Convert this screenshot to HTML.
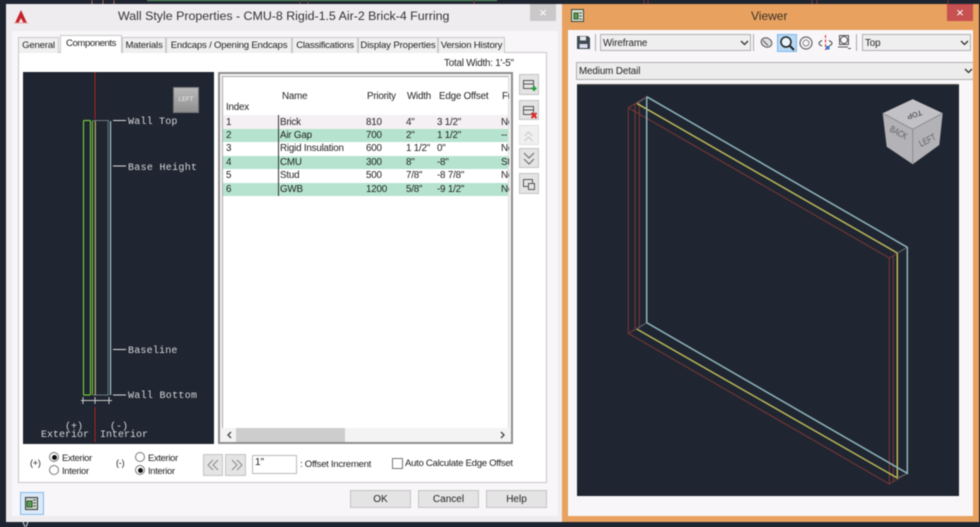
<!DOCTYPE html>
<html><head><meta charset="utf-8"><style>
html,body{margin:0;padding:0;background:#1e2430}
#p{position:relative;width:980px;height:527px;overflow:hidden;background:#1e2430;font:10px "Liberation Sans",sans-serif;color:#222;filter:blur(.45px)}
#p div,#p span.t{position:absolute;white-space:nowrap}
.t{line-height:12px}
.tab{background:#f0f0f0;border:1px solid #c9c9c9;border-bottom:0;box-sizing:border-box;height:16px;top:37px;text-align:center;line-height:15px;font-size:9.6px;letter-spacing:-.2px}
.btn{background:#e4e4e4;border:1px solid #c4c4c4;box-sizing:border-box;text-align:center}
.row{left:223px;width:285px;height:13.5px}
.c{font-size:9.8px;line-height:13px;color:#222;letter-spacing:-.2px}
.combo{background:#efefef;border:1px solid #b0b0b0;box-sizing:border-box;line-height:17px;padding-left:2px;font-size:9.8px;letter-spacing:-.1px}
.lbl{font-family:"Liberation Mono",monospace;color:#d6d8da;font-size:10px;letter-spacing:.2px;line-height:10px}
.rad{width:10px;height:10px;border:1px solid #777;border-radius:50%;background:#fff;box-sizing:border-box}
.rad.on:after{content:"";position:absolute;left:1.5px;top:1.5px;width:5px;height:5px;border-radius:50%;background:#111}
</style></head><body><div id="p">

<svg style="position:absolute;left:0;top:0" width="980" height="5"><g stroke-width="1"><path d="M92 0v4M103 0v4M114 0v4" stroke="#a86a60"/><path d="M147 0h350" stroke="#5da86a" stroke-width="2"/><path d="M300 0v4M308 0v4M474 0v4" stroke="#8a3a3a"/><path d="M644 0v4M648 0v4M812 0v4M817 0v4M948 0v4" stroke="#7a3a40"/></g></svg>

<!-- Dialog -->
<div style="left:6px;top:4px;width:556px;height:518px;background:#efecef"></div>
<div style="left:12px;top:31px;width:546px;height:485px;background:#f8f6f8"></div>
<svg style="position:absolute;left:13px;top:9px" width="16" height="16"><path d="M8 1L14 14H10.500L8 9 5.500 14H2z" fill="#c3242c"/><path d="M1 14h14" stroke="#e8a0a0"/></svg>
<div class="t" style="left:118px;top:9px;font-size:12.4px;line-height:15px;color:#333">Wall Style Properties - CMU-8 Rigid-1.5 Air-2 Brick-4 Furring</div>
<div style="left:530px;top:4px;width:26px;height:17px;background:#cbc8ca;color:#fff;text-align:center;font-size:13px;line-height:17px">×</div>

<div style="left:18px;top:52px;width:529px;height:431px;background:#fff;border:1px solid #c6c6c6;box-sizing:border-box"></div>
<div class="tab" style="left:18px;width:41px">General</div>
<div class="tab" style="left:60px;width:62px;top:35px;height:18px;background:#fff;line-height:16px;letter-spacing:-.45px">Components</div>
<div class="tab" style="left:122px;width:44px">Materials</div>
<div class="tab" style="left:166px;width:126px">Endcaps / Opening Endcaps</div>
<div class="tab" style="left:292px;width:66px;letter-spacing:-.25px">Classifications</div>
<div class="tab" style="left:358px;width:80px;letter-spacing:-.15px">Display Properties</div>
<div class="tab" style="left:438px;width:67px">Version History</div>
<div class="t" style="left:444px;top:58px;font-size:9.8px;letter-spacing:-.2px">Total Width: 1'-5"</div>

<!-- Preview -->
<div style="left:23px;top:72px;width:191px;height:372px;background:#1f2531"></div>
<svg style="position:absolute;left:23px;top:72px" width="191" height="372" fill="none">
<path d="M72 0V47M72 335V370" stroke="#b01e22" stroke-width="1"/>
<rect x="60.500" y="48.500" width="7" height="274.500" rx="1" stroke="#74c43a" stroke-width="1.200"/>
<path d="M69.500 323V50q0-1.500 1.500-1.500H86M86 323H70" stroke="#6f7678"/>
<path d="M69.500 49V323" stroke="#74c43a" stroke-width="1"/>
<path d="M72.300 49V323" stroke="#d8cb78" stroke-width="1"/>
<path d="M85 49V323" stroke="#6d7578" stroke-width="1"/>
<path d="M87.500 49V323" stroke="#9dc4cb" stroke-width="1.300"/>
<path d="M90 48.500h13M90 94h13M90 277.500h13M90 323h13" stroke="#dcdcdc" stroke-width="1"/>
<path d="M58 328.500H89M60 325v7M72 325v7M86 325v7" stroke="#c9cccc" stroke-width="1"/>
</svg>
<div class="lbl" style="left:128px;top:118px">Wall Top</div>
<div class="lbl" style="left:128px;top:164px;letter-spacing:.3px">Base Height</div>
<div class="lbl" style="left:128px;top:347px">Baseline</div>
<div class="lbl" style="left:128px;top:392px;letter-spacing:.3px">Wall Bottom</div>
<div class="lbl" style="left:65px;top:423px;letter-spacing:0">(+)</div>
<div class="lbl" style="left:41px;top:431px;letter-spacing:0">Exterior</div>
<div class="lbl" style="left:110px;top:423px;letter-spacing:0">(-)</div>
<div class="lbl" style="left:100px;top:431px;letter-spacing:0">Interior</div>
<div style="left:173px;top:87px;width:26px;height:26px;background:linear-gradient(#b9b9b9,#8f8f8f);border:1px solid #777;box-sizing:border-box;color:#eee;font-size:6px;text-align:center;line-height:24px">LEFT</div>

<!-- List -->
<div style="left:218px;top:72px;width:295px;height:372px;background:#f3f3f3;border:2px solid #8e8e8e;box-sizing:border-box"></div>
<div style="left:222px;top:76px;width:287px;height:352px;background:#fff;border:1px solid #a8a8a8;border-bottom:0;border-right:1px solid #ddd;box-sizing:border-box"></div>
<div class="c" style="left:226px;top:101px">Index</div>
<div class="c" style="left:282px;top:90px">Name</div>
<div class="c" style="left:367px;top:90px">Priority</div>
<div class="c" style="left:407px;top:90px">Width</div>
<div class="c" style="left:439px;top:90px">Edge Offset</div>
<div class="c" style="left:502px;top:90px;width:7px;overflow:hidden">Fu</div>
<div class="row" style="top:115px;background:#f5f0f3"></div>
<div class="row" style="top:128.500px;background:#b5e3cf"></div>
<div class="row" style="top:155.500px;background:#b5e3cf"></div>
<div class="row" style="top:182.500px;background:#b5e3cf"></div>
<div style="left:278px;top:115px;width:1px;height:81px;background:#333"></div>
<div class="c" style="left:226px;top:116px">1</div><div class="c" style="left:280px;top:116px">Brick</div><div class="c" style="left:366px;top:116px">810</div><div class="c" style="left:406px;top:116px">4"</div><div class="c" style="left:437px;top:116px">3 1/2"</div><div class="c" style="left:501px;top:116px;width:8px;overflow:hidden">No</div>
<div class="c" style="left:226px;top:129px">2</div><div class="c" style="left:280px;top:129px">Air Gap</div><div class="c" style="left:366px;top:129px">700</div><div class="c" style="left:406px;top:129px">2"</div><div class="c" style="left:437px;top:129px">1 1/2"</div><div class="c" style="left:501px;top:129px;width:8px;overflow:hidden">--</div>
<div class="c" style="left:226px;top:142px">3</div><div class="c" style="left:280px;top:142px">Rigid Insulation</div><div class="c" style="left:366px;top:142px">600</div><div class="c" style="left:406px;top:142px">1 1/2"</div><div class="c" style="left:437px;top:142px">0"</div><div class="c" style="left:501px;top:142px;width:8px;overflow:hidden">No</div>
<div class="c" style="left:226px;top:156px">4</div><div class="c" style="left:280px;top:156px">CMU</div><div class="c" style="left:366px;top:156px">300</div><div class="c" style="left:406px;top:156px">8"</div><div class="c" style="left:437px;top:156px">-8"</div><div class="c" style="left:501px;top:156px;width:8px;overflow:hidden">St</div>
<div class="c" style="left:226px;top:169px">5</div><div class="c" style="left:280px;top:169px">Stud</div><div class="c" style="left:366px;top:169px">500</div><div class="c" style="left:406px;top:169px">7/8"</div><div class="c" style="left:437px;top:169px">-8 7/8"</div><div class="c" style="left:501px;top:169px;width:8px;overflow:hidden">No</div>
<div class="c" style="left:226px;top:183px">6</div><div class="c" style="left:280px;top:183px">GWB</div><div class="c" style="left:366px;top:183px">1200</div><div class="c" style="left:406px;top:183px">5/8"</div><div class="c" style="left:437px;top:183px">-9 1/2"</div><div class="c" style="left:501px;top:183px;width:8px;overflow:hidden">No</div>
<!-- scrollbar -->
<div style="left:236px;top:428px;width:109px;height:14px;background:#cdcdcd"></div>
<svg style="position:absolute;left:222px;top:428px" width="287" height="14" fill="none" stroke="#444" stroke-width="1.300"><path d="M9 4L6 7l3 3M279 4l3 3-3 3"/></svg>

<!-- side buttons -->
<div class="btn" style="left:519px;top:74px;width:20px;height:21px"></div>
<div class="btn" style="left:519px;top:100px;width:20px;height:20px"></div>
<div class="btn" style="left:519px;top:125px;width:20px;height:20px;background:#f0f0f0;border-color:#e0e0e0"></div>
<div class="btn" style="left:519px;top:148px;width:20px;height:20px"></div>
<div class="btn" style="left:519px;top:173px;width:20px;height:21px"></div>
<svg style="position:absolute;left:519px;top:74px" width="20" height="120" fill="none">
<rect x="4.500" y="6.500" width="10" height="8" stroke="#555"/><path d="M5 10h9" stroke="#555"/><path d="M15 12v5M12.500 14.500h5" stroke="#1e9e3c" stroke-width="2"/>
<rect x="4.500" y="32.500" width="10" height="8" stroke="#555"/><path d="M5 36h9" stroke="#555"/><path d="M12.500 39l5 5M17.500 39l-5 5" stroke="#d22" stroke-width="2"/>
<path d="M5.500 62l4-4 4 4M5.500 67l4-4 4 4" stroke="#ccc" stroke-width="1.200"/>
<path d="M5 79l5 5 5-5M5 85l5 5 5-5" stroke="#666" stroke-width="1"/>
<rect x="4.500" y="105.500" width="9" height="7" stroke="#555"/><rect x="9.500" y="109.500" width="6" height="6" fill="#e4e4e4" stroke="#555"/>
</svg>

<!-- bottom controls -->
<div class="c" style="left:30px;top:457px;font-size:9px">(+)</div>
<div class="rad on" style="left:49px;top:452px"></div><div class="c" style="left:62px;top:451px;font-size:9.4px;letter-spacing:-.3px">Exterior</div>
<div class="rad" style="left:49px;top:465px"></div><div class="c" style="left:62px;top:464px;font-size:9.4px;letter-spacing:-.3px">Interior</div>
<div class="c" style="left:116px;top:457px;font-size:9px">(-)</div>
<div class="rad" style="left:135px;top:452px"></div><div class="c" style="left:148px;top:451px;font-size:9.4px;letter-spacing:-.3px">Exterior</div>
<div class="rad on" style="left:135px;top:465px"></div><div class="c" style="left:148px;top:464px;font-size:9.4px;letter-spacing:-.3px">Interior</div>
<div class="btn" style="left:203px;top:454px;width:20px;height:22px"></div>
<div class="btn" style="left:225px;top:454px;width:21px;height:22px"></div>
<svg style="position:absolute;left:203px;top:454px" width="44" height="22" fill="none" stroke="#8a8a8a" stroke-width="1"><path d="M10 6l-5 5 5 5M15 6l-5 5 5 5M29 6l5 5-5 5M34 6l5 5-5 5"/></svg>
<div style="left:252px;top:455px;width:45px;height:19px;background:#fff;border:1px solid #bbb;box-sizing:border-box;padding-left:2px;line-height:14px;font-size:10px">1"</div>
<div class="c" style="left:300px;top:458px;font-size:9.6px;letter-spacing:-.28px">: Offset Increment</div>
<div style="left:392px;top:458px;width:11px;height:11px;background:#fff;border:1px solid #777;box-sizing:border-box"></div>
<div class="c" style="left:405px;top:457px;font-size:9.6px;letter-spacing:-.3px">Auto Calculate Edge Offset</div>

<div class="btn" style="left:20px;top:492px;width:24px;height:23px;background:#dbe9f6;border:1px solid #7fbdf0"></div>
<svg style="position:absolute;left:24px;top:496px" width="16" height="15" fill="none"><rect x="1.500" y="1.500" width="12" height="12" fill="#cfd8cf" stroke="#333"/><path d="M3 5h5v6H3z" fill="#5a9a55" stroke="#2c5a2a"/><path d="M9 4h3M9 7h3M9 10h3" stroke="#555"/></svg>
<div class="btn" style="left:350px;top:490px;width:61px;height:18px;font-size:10px;line-height:17px">OK</div>
<div class="btn" style="left:418px;top:490px;width:61px;height:18px;font-size:10px;line-height:17px">Cancel</div>
<div class="btn" style="left:486px;top:490px;width:61px;height:18px;font-size:10px;line-height:17px">Help</div>

<!-- Viewer -->
<div style="left:562px;top:4px;width:417px;height:518px;background:#e8a15f"></div>
<div style="left:568px;top:30px;width:405px;height:486px;background:#f8f6f8;overflow:hidden">
<div class="combo" style="left:8px;top:32px;width:398px;height:18px;background:#ececec">Medium Detail</div>
</div>
<svg style="position:absolute;left:571px;top:9px" width="14" height="14" fill="none"><rect x=".5" y=".5" width="12" height="12" fill="#d9e2d4" stroke="#3a4a3a"/><path d="M3 4h4v6H3z" fill="#5a9a55" stroke="#2c5a2a"/><path d="M8 4h3M8 7h3M8 10h3" stroke="#555"/></svg>
<div class="t" style="left:751px;top:9px;font-size:12px;line-height:15px;color:#3a3026">Viewer</div>
<div style="left:947px;top:4px;width:26px;height:17px;background:#c75050;color:#fff;text-align:center;font-size:13px;line-height:17px">×</div>

<svg style="position:absolute;left:576px;top:35px" width="16" height="15"><path d="M1 1h11l2 2v11H1z" fill="#3f4a54"/><rect x="4" y="1.500" width="6" height="4" fill="#e8e8e8"/><rect x="3.500" y="9" width="8" height="4" fill="#dde"/></svg>
<div style="left:595px;top:34px;width:1px;height:17px;background:#aaa"></div>
<div class="combo" style="left:600px;top:34px;width:151px;height:17px">Wireframe</div>
<div style="left:753px;top:34px;width:1px;height:17px;background:#aaa"></div>
<div style="left:777px;top:34px;width:20px;height:18px;background:#b7d9f5;border:1px solid #7fb8ea;box-sizing:border-box"></div>
<svg style="position:absolute;left:757px;top:34px" width="105" height="18" fill="none" stroke="#555">
<ellipse cx="9.500" cy="8.500" rx="5.500" ry="4.500" transform="rotate(25 9.500 8.500)" fill="#ddd"/><path d="M6 6.500l5 5"/>
<circle cx="29" cy="8" r="5" stroke="#222" stroke-width="1.500" fill="#eaf4fc"/><path d="M33 12l4 4" stroke="#222" stroke-width="2"/>
<circle cx="49" cy="9" r="6" stroke="#666" stroke-width="1.200"/><circle cx="49" cy="9" r="3" stroke="#888"/>
<path d="M65 6.500q-6 3 0 5.500M72 6.500q6 3 0 5.500" stroke="#444"/><path d="M68.500 1v15" stroke="#d22" stroke-dasharray="3 1.500"/><rect x="69" y="12" width="3.500" height="3.500" fill="#2b78d0" stroke="none"/>
<circle cx="87" cy="6" r="3.500" stroke="#555"/><path d="M82.500 1.500h9v9h-9zM81 13h10M91 14.500h3" stroke="#555"/>
</svg>
<div style="left:856px;top:34px;width:1px;height:17px;background:#aaa"></div>
<div class="combo" style="left:862px;top:34px;width:109px;height:17px">Top</div>
<svg style="position:absolute;left:0;top:0" width="980" height="100" fill="none" stroke="#333" stroke-width="1.300"><path d="M741 41l3.500 3.500 3.500-3.500M961 41l3.500 3.500 3.500-3.500M965 69l3.500 3.500 3.500-3.500"/></svg>

<div style="left:577px;top:84px;width:382px;height:412px;background:#1f2531;border-top:1px solid #555;box-sizing:border-box"></div>
<svg style="position:absolute;left:577px;top:84px" width="382" height="412" viewBox="577 84 382 412" fill="none">
<g stroke="#7c3a36" stroke-width="1">
<path d="M628.300 107.700V333.300L889.300 484V258L628.300 107.700"/>
<path d="M635 104V330M893.300 256V481"/>
<path d="M639.300 101.500V327"/>
<path d="M628.300 107.700L646.700 96.700M628.300 333.300L646.700 322.700M889.300 484L907.300 473.300M889.300 258L907.300 247.300"/>
</g>
<g stroke="#bdb958" stroke-width="1.500">
<path d="M636.700 103.300L897.300 253V478L636.700 329"/>
</g>
<g stroke="#8fb6bd" stroke-width="1.500">
<path d="M646.700 96.700V322.700L907.300 473.300V247.300L646.700 96.700"/>
</g>
<g stroke="#566a70" stroke-width="1"><path d="M645 98.500L636.700 103.300M645 323.700L636.700 329M906 248L897.300 253M906 474L897.300 478"/></g>
<path d="M912.700 99.300L942.700 113.300 939.300 145 912.700 164.300 886.700 146.700 882.700 113.300z" fill="#b3b3b7"/>
<path d="M912.700 99.300L942.700 113.300 912.700 129.300 882.700 113.300z" fill="#c2c2c6"/>
<path d="M882.700 113.300L912.700 129.300 942.700 113.300M912.700 129.300V164.300" stroke="#8c8c90"/>
<text transform="translate(921 110) rotate(162)" font-family="Liberation Sans" font-size="7.500" font-weight="bold" fill="#5e5e62" stroke="none">TOP</text>
<text transform="translate(889 131) rotate(28) scale(.85 1.150)" font-family="Liberation Sans" font-size="8" fill="#5e5e62" stroke="none">BACK</text>
<text transform="translate(921 147) rotate(-27) scale(.9 1.150)" font-family="Liberation Sans" font-size="8" fill="#5e5e62" stroke="none">LEFT</text>
</svg>
<svg style="position:absolute;left:20px;top:522px" width="20" height="5" fill="none" stroke="#ddd"><path d="M3 0l2 5M8 0L6 5"/></svg>
</div></body></html>
